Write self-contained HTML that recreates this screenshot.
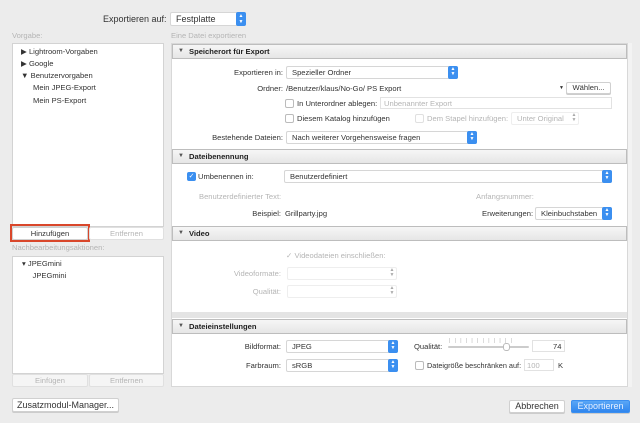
<!DOCTYPE html>
<html><head><meta charset="utf-8"><style>
*{box-sizing:border-box;margin:0;padding:0}
body{width:640px;height:423px;background:#ececec;font-family:"Liberation Sans",sans-serif;font-size:7.6px;color:#333;position:relative;overflow:hidden}
.a{position:absolute;white-space:nowrap}
.g{color:#b5b5b5}
.box{position:absolute;background:#fff;border:1px solid #d3d3d3}
.btn{position:absolute;background:#fff;border:1px solid #d0d0d0;border-radius:2px;text-align:center;line-height:12px;box-shadow:0 1px 0 #ccc}
.pop{position:absolute;background:#fff;border:1px solid #d6d6d6;border-radius:2px;height:13px;line-height:11px;padding-left:5px}
.pop .ar{position:absolute;right:-1px;top:-1px;width:10px;height:13px;background:#3b8ff0;border-radius:2px;color:#fff;font-size:5px;line-height:5px;text-align:center;padding-top:1px}
.pop.dis .ar{background:none;color:#aaa}
.hdr{position:absolute;left:172px;width:455px;height:15px;background:linear-gradient(#f6f6f6,#e6e6e6);border:1px solid #bdbdbd;font-weight:bold;line-height:13px;padding-left:16px;color:#222}
.hdr:before{content:"▼";position:absolute;left:5px;font-size:6px;color:#555}
.cb{position:absolute;width:9px;height:9px;border:1px solid #bbb;border-radius:2px;background:#fff}
.cbon{background:#3b8ff0;border-color:#3b8ff0;color:#fff;font-size:7px;line-height:7px;text-align:center}
.r{text-align:right}
</style></head><body>
<div class="a" style="left:103px;top:14px;font-size:9px">Exportieren auf:</div>
<div class="pop" style="left:170px;top:12px;width:76px;height:14px;font-size:9px;line-height:12px">Festplatte<div class="ar" style="height:14px;line-height:6px">▲<br>▼</div></div>
<div class="a g" style="left:12px;top:31px">Vorgabe:</div>
<div class="a g" style="left:171px;top:31px">Eine Datei exportieren</div>

<div class="box" style="left:12px;top:43px;width:152px;height:184px"></div>
<div class="a" style="left:21px;top:46px;line-height:12px">▶ Lightroom-Vorgaben<br>▶ Google<br>▼ Benutzervorgaben</div>
<div class="a" style="left:33px;top:82px;line-height:12.5px">Mein JPEG-Export<br>Mein PS-Export</div>
<div class="btn" style="left:12px;top:227px;width:76px;height:13px;line-height:11px">Hinzufügen</div>
<div style="position:absolute;left:10px;top:224px;width:80px;height:18px;border:2px solid #d9472b"></div>
<div class="btn g" style="left:89px;top:227px;width:75px;height:13px;box-shadow:none;border-color:#e0e0e0">Entfernen</div>
<div class="a g" style="left:12px;top:243px">Nachbearbeitungsaktionen:</div>
<div class="box" style="left:12px;top:256px;width:152px;height:118px"></div>
<div class="a" style="left:22px;top:258px;line-height:12px">▾ JPEGmini<br>&nbsp;&nbsp;&nbsp;&nbsp;&nbsp;JPEGmini</div>
<div class="btn g" style="left:12px;top:374px;width:76px;height:13px;box-shadow:none;border-color:#e0e0e0;background:#f5f5f5">Einfügen</div>
<div class="btn g" style="left:89px;top:374px;width:75px;height:13px;box-shadow:none;border-color:#e0e0e0;background:#f5f5f5">Entfernen</div>
<div class="btn" style="left:12px;top:398px;width:107px;height:14px;font-size:9px">Zusatzmodul-Manager...</div>

<div class="box" style="left:171px;top:43px;width:457px;height:344px;border-color:#d8d8d8"></div>
<div style="position:absolute;left:628px;top:43px;width:4px;height:344px;background:#f3f3f3"></div>

<div class="hdr" style="top:44px">Speicherort für Export</div>
<div class="a r" style="left:200px;width:83px;top:68px">Exportieren in:</div>
<div class="pop" style="left:286px;top:66px;width:172px">Spezieller Ordner<div class="ar">▲<br>▼</div></div>
<div class="a r" style="left:200px;width:83px;top:84px">Ordner:</div>
<div class="a" style="left:286px;top:84px">/Benutzer/klaus/No-Go/ PS Export</div>
<div class="a" style="left:559px;top:85px;font-size:5px">▼</div>
<div class="btn" style="left:566px;top:82px;width:45px;height:12px;line-height:10px">Wählen...</div>
<div class="cb" style="left:285px;top:99px"></div>
<div class="a" style="left:297px;top:99px">In Unterordner ablegen:</div>
<div class="box" style="left:380px;top:97px;width:232px;height:12px;border-color:#e2e2e2"></div>
<div class="a g" style="left:384px;top:99px">Unbenannter Export</div>
<div class="cb" style="left:285px;top:114px"></div>
<div class="a" style="left:297px;top:114px">Diesem Katalog hinzufügen</div>
<div class="cb" style="left:415px;top:114px;border-color:#e0e0e0"></div>
<div class="a g" style="left:427px;top:114px">Dem Stapel hinzufügen:</div>
<div class="pop dis g" style="left:511px;top:112px;width:68px;border-color:#eee">Unter Original<div class="ar">▲<br>▼</div></div>
<div class="a r" style="left:180px;width:103px;top:133px">Bestehende Dateien:</div>
<div class="pop" style="left:286px;top:131px;width:191px">Nach weiterer Vorgehensweise fragen<div class="ar">▲<br>▼</div></div>

<div class="hdr" style="top:149px">Dateibenennung</div>
<div class="cb cbon" style="left:187px;top:172px">✓</div>
<div class="a" style="left:198px;top:172px">Umbenennen in:</div>
<div class="pop" style="left:284px;top:170px;width:328px">Benutzerdefiniert<div class="ar">▲<br>▼</div></div>
<div class="a g" style="left:199px;top:192px">Benutzerdefinierter Text:</div>
<div class="a g" style="left:476px;top:192px">Anfangsnummer:</div>
<div class="a r" style="left:200px;width:81px;top:209px">Beispiel:</div>
<div class="a" style="left:285px;top:209px">Grillparty.jpg</div>
<div class="a" style="left:482px;top:209px">Erweiterungen:</div>
<div class="pop" style="left:535px;top:207px;width:77px">Kleinbuchstaben<div class="ar">▲<br>▼</div></div>

<div class="hdr" style="top:226px">Video</div>
<div class="a g" style="left:286px;top:251px">✓ Videodateien einschließen:</div>
<div class="a g r" style="left:200px;width:81px;top:269px">Videoformate:</div>
<div class="pop dis" style="left:287px;top:267px;width:110px;border-color:#eee"><div class="ar">▲<br>▼</div></div>
<div class="a g r" style="left:200px;width:81px;top:287px">Qualität:</div>
<div class="pop dis" style="left:287px;top:285px;width:110px;border-color:#eee"><div class="ar">▲<br>▼</div></div>
<div style="position:absolute;left:172px;top:312px;width:455px;height:6px;background:#e4e4e4"></div>

<div class="hdr" style="top:319px">Dateieinstellungen</div>
<div class="a r" style="left:200px;width:81px;top:342px">Bildformat:</div>
<div class="pop" style="left:286px;top:340px;width:112px">JPEG<div class="ar">▲<br>▼</div></div>
<div class="a" style="left:414px;top:342px">Qualität:</div>
<div style="position:absolute;left:448px;top:346px;width:81px;height:2px;background:#ccc;border-radius:1px"></div>
<div class="a" style="left:449px;top:338px;font-size:5px;color:#aaa;letter-spacing:4.3px">||||||||||||</div>
<div style="position:absolute;left:503px;top:343px;width:7px;height:8px;background:#fff;border:1px solid #bbb;border-radius:3px"></div>
<div class="box" style="left:532px;top:340px;width:33px;height:12px;border-color:#e2e2e2"></div>
<div class="a" style="left:553px;top:342px">74</div>
<div class="a r" style="left:200px;width:81px;top:361px">Farbraum:</div>
<div class="pop" style="left:286px;top:359px;width:112px">sRGB<div class="ar">▲<br>▼</div></div>
<div class="cb" style="left:415px;top:361px"></div>
<div class="a" style="left:427px;top:361px;font-size:7.3px">Dateigröße beschränken auf:</div>
<div class="box" style="left:524px;top:359px;width:30px;height:12px;border-color:#e2e2e2"></div>
<div class="a g" style="left:527px;top:361px">100</div>
<div class="a" style="left:558px;top:361px">K</div>

<div class="btn" style="left:509px;top:400px;width:56px;height:13px;font-size:9px;line-height:11px">Abbrechen</div>
<div class="btn" style="left:571px;top:400px;width:59px;height:13px;font-size:9px;line-height:11px;background:linear-gradient(#5aa6f6,#2f85ee);border-color:#3b8ff0;color:#e6f0ff">Exportieren</div>
</body></html>
